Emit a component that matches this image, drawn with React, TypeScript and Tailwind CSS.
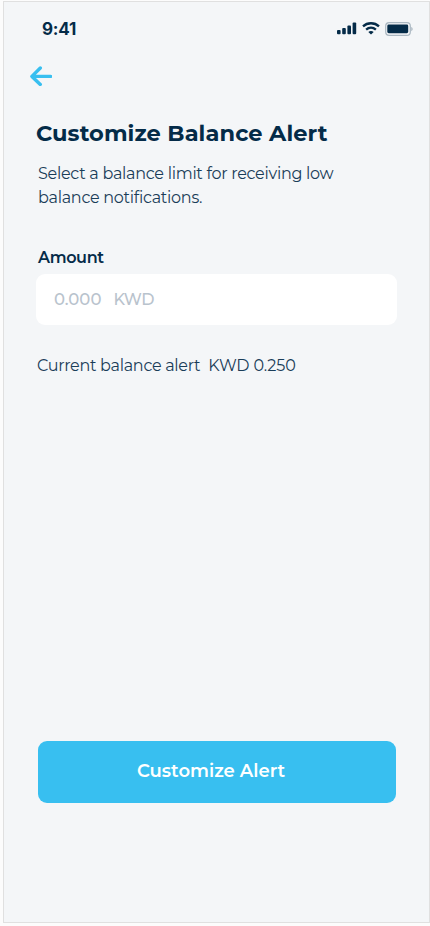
function SignalIcon() {
  return (
    <svg width="20" height="13" viewBox="0 0 20 13" fill="#042b48" aria-hidden="true">
      <rect x="0" y="8" width="3.6" height="4.2" rx="1" />
      <rect x="5.2" y="6" width="3.6" height="6.2" rx="1" />
      <rect x="10.4" y="3.4" width="3.6" height="8.8" rx="1" />
      <rect x="15.6" y="0.4" width="3.6" height="11.8" rx="1" />
    </svg>
  );
}

function WifiIcon() {
  return (
    <svg width="18" height="13" viewBox="0 0 18 13" fill="none" stroke="#042b48" strokeWidth="2.3" aria-hidden="true">
      <path d="M1 4.4C5.5.2 12.5.2 17 4.4" />
      <path d="M4.1 7.7C7 5.1 11 5.1 13.9 7.7" />
      <path d="M6.3 9.9C7.9 8.6 10.1 8.6 11.7 9.9L9 12.6Z" fill="#042b48" stroke="none" />
    </svg>
  );
}

function BatteryIcon() {
  return (
    <svg width="28" height="14" viewBox="0 0 28 14" aria-hidden="true">
      <rect x="0.7" y="0.7" width="24.6" height="12.6" rx="3.4" fill="none" stroke="#aab7c1" strokeWidth="1.2" />
      <rect x="2.3" y="2.6" width="20.9" height="8.6" rx="1.4" fill="#042b48" />
      <path d="M26.3 5v4.2c.8-.4 1.3-1.1 1.3-2.1s-.5-1.7-1.3-2.1Z" fill="#a2b0bb" />
    </svg>
  );
}

export default function App() {
  return (
    <div className="h-[926px] w-[430px] overflow-hidden bg-[#fcfcfc] pl-[3px] pt-px font-['Montserrat',Inter,sans-serif] text-[#042b48]">
      <main className="flex h-[922px] w-[427px] flex-col border border-[#e0e0e0] bg-[#f4f6f8] pl-8">
        <header className="flex h-[53px] items-center justify-between pl-[6px] pr-[16px]">
          <span className="mt-[2px] font-[Inter] text-[17px] font-bold leading-none tracking-[-0.2px]">9:41</span>
          <div className="flex items-center gap-[5px]">
            <SignalIcon />
            <WifiIcon />
            <BatteryIcon />
          </div>
        </header>
        <button className="-ml-[6px] mt-[11px] h-[20px] w-[22px]" aria-label="Back">
          <svg width="22" height="20" viewBox="0 0 22 20" fill="none" stroke="#38bff0" strokeWidth="3.4" strokeLinecap="round" strokeLinejoin="round">
            <path d="M10.3 2 1.9 10.4l8.4 8M2.2 10.4h18.4" />
          </svg>
        </button>
        <h1 className="mt-[31px] h-8 whitespace-nowrap text-[22.5px] font-bold leading-8 tracking-[0.08px]">Customize Balance Alert</h1>
        <p className="ml-[2px] mt-[13px] whitespace-nowrap text-[16px] font-normal leading-6 tracking-[-0.28px] text-[#1a3d58]">
          Select a balance limit for receiving low
          <br />
          balance notifications.
        </p>
        <label htmlFor="amount" className="ml-[2px] mt-[36px] h-6 text-[16px] font-semibold leading-6 tracking-[-0.35px]">Amount</label>
        <div id="amount" className="mt-[4px] flex h-[51px] w-[361px] items-baseline gap-[12px] rounded-[9px] bg-white pl-[18px] text-[16.5px] font-medium leading-[50px] text-[#b9c3cd]">
          <span>0.000</span>
          <span className="text-[16px] tracking-[-0.4px]">KWD</span>
        </div>
        <p className="ml-px mt-[29px] flex h-6 gap-[8px] whitespace-nowrap text-[16px] font-normal leading-6 tracking-[-0.3px] text-[#1a3d58]">
          <span>Current balance alert</span>
          <span className="tracking-[-0.1px]">KWD 0.250</span>
        </p>
        <button className="ml-[2px] mt-[363px] h-[62px] w-[358px] rounded-[9px] bg-[#38bff0] pb-[2px] pr-[12px] text-[18px] font-semibold text-white">
          Customize Alert
        </button>
      </main>
    </div>
  );
}
